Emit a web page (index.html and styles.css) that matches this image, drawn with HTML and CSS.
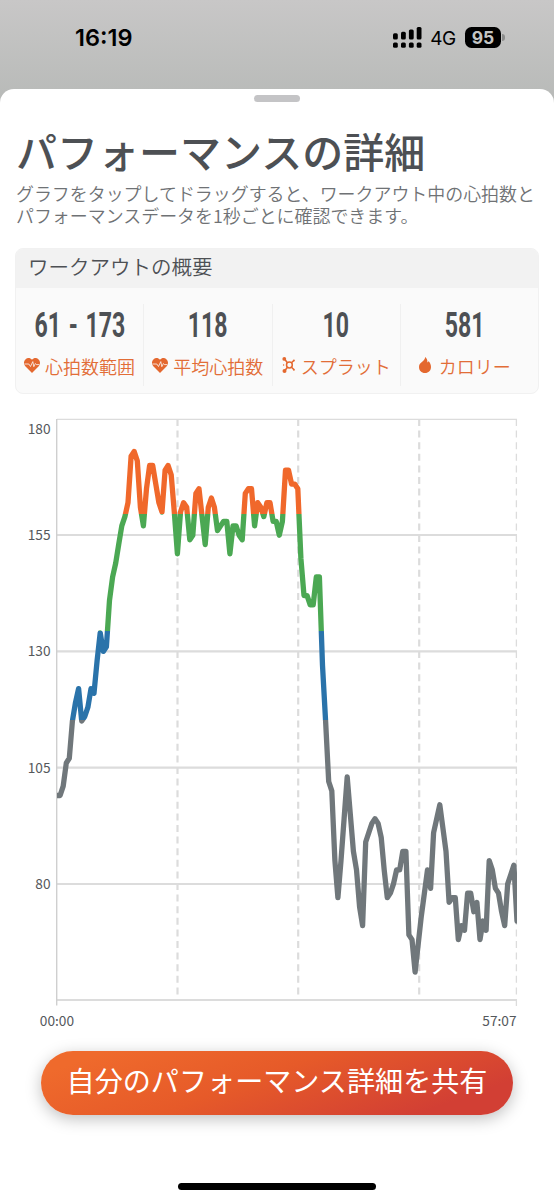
FILE: index.html
```html
<!DOCTYPE html>
<html lang="ja">
<head>
    <meta charset="UTF-8">
    <meta name="viewport" content="width=device-width, initial-scale=1.0">
    <title>パフォーマンスの詳細</title>
    <link rel="stylesheet" href="styles.css">
</head>
<body>

<header class="status-bar">
    <span class="time">16:19</span>
    <div class="status-right">
        <svg class="signal" width="29" height="21" viewBox="0 0 29 21">
            <rect x="0" y="6.2" width="4.8" height="6.2" rx="1.5"/>
            <rect x="8" y="4.8" width="4.8" height="7.6" rx="1.5"/>
            <rect x="15.9" y="2.6" width="4.8" height="9.8" rx="1.5"/>
            <rect x="23.7" y="0" width="4.8" height="12.4" rx="1.5"/>
            <rect x="0" y="15.4" width="4.8" height="5.3" rx="1.5"/>
            <rect x="8" y="15.4" width="4.8" height="5.3" rx="1.5"/>
            <rect x="15.9" y="15.4" width="4.8" height="5.3" rx="1.5"/>
            <rect x="23.7" y="15.4" width="4.8" height="5.3" rx="1.5"/>
        </svg>
        <span class="network">4G</span>
        <span class="battery">95</span>
        <span class="battery-tip"></span>
    </div>
</header>

<main class="sheet">
    <div class="grabber"></div>
    <h1>パフォーマンスの詳細</h1>
    <p class="description">グラフをタップしてドラッグすると、ワークアウト中の心拍数と<br>パフォーマンスデータを1秒ごとに確認できます。</p>

    <section class="summary">
        <h2>ワークアウトの概要</h2>
        <div class="stats">
            <div class="stat">
                <div class="value"><span>61 - 173</span></div>
                <div class="label">
                    <svg class="icon" width="16" height="15" viewBox="0 0 16 15">
                        <path d="M8 15 1.3 8.2C-.5 6.2-.4 3.2 1.4 1.4 3.3-.4 6.2-.4 8 1.8 9.8-.4 12.7-.4 14.6 1.4c1.8 1.8 1.9 4.8.1 6.8z"/>
                        <path class="pulse" d="M.5 6h4.3l1.700 2.500L8.800 3.600 9.800 8.700l1.600-3.200 1 1.100h3"/>
                    </svg>
                    <span>心拍数範囲</span>
                </div>
            </div>
            <div class="stat">
                <div class="value"><span>118</span></div>
                <div class="label">
                    <svg class="icon" width="16" height="15" viewBox="0 0 16 15">
                        <path d="M8 15 1.3 8.2C-.5 6.2-.4 3.2 1.4 1.4 3.3-.4 6.2-.4 8 1.8 9.8-.4 12.7-.4 14.6 1.4c1.8 1.8 1.9 4.8.1 6.8z"/>
                        <path class="pulse" d="M.5 6h4.3l1.700 2.500L8.800 3.600 9.800 8.700l1.600-3.200 1 1.100h3"/>
                    </svg>
                    <span>平均心拍数</span>
                </div>
            </div>
            <div class="stat">
                <div class="value"><span>10</span></div>
                <div class="label splat">
                    <svg class="icon" width="13" height="16" viewBox="0 0 13 16">
                        <circle class="ring" cx="7.4" cy="8" r="2.9"/>
                        <path class="ring" d="M5.4 5.8 2.7 2.3M5.4 10.2 2.8 13.7M9.5 5.8l2.3-2.3M9.5 10.2l2.3 2.3"/>
                        <circle cx="2.3" cy="1.9" r="1.9"/>
                        <circle cx="2.5" cy="13.9" r="2"/>
                        <circle cx="11.9" cy="3.4" r="1"/>
                        <circle cx="11.9" cy="12.7" r="1"/>
                        <circle cx="1.6" cy="8" r=".7"/>
                    </svg>
                    <span>スプラット</span>
                </div>
            </div>
            <div class="stat">
                <div class="value"><span>581</span></div>
                <div class="label calorie">
                    <svg class="icon" width="12" height="16" viewBox="0 0 12 16">
                        <path d="M6.2 0C8 1.500 8.600 3.200 8.300 5.400l1.400-1.200C11.200 5.800 12 7.800 12 10c0 3.500-2.400 6-6 6s-6-2.500-6-6c0-2.200.9-3.500 2.600-4.800C4.800 3.500 6 2 6.200 0z"/>
                    </svg>
                    <span>カロリー</span>
                </div>
            </div>
        </div>
    </section>

    <svg class="chart" width="554" height="620" viewBox="0 0 554 620">
        <defs>
            <!-- Heart rate zones -->
            <linearGradient id="zones" gradientUnits="userSpaceOnUse" x1="0" y1="9" x2="0" y2="590">
                <stop offset="0.164" stop-color="#f0682b"/>
                <stop offset="0.164" stop-color="#4ba853"/>
                <stop offset="0.365" stop-color="#4ba853"/>
                <stop offset="0.365" stop-color="#2a73aa"/>
                <stop offset="0.518" stop-color="#2a73aa"/>
                <stop offset="0.518" stop-color="#70777b"/>
            </linearGradient>
            <clipPath id="plot"><rect x="57" y="0" width="460" height="600"/></clipPath>
        </defs>
        <g class="grid">
            <path class="thin" d="M57 9.300H517"/>
            <path d="M57 125H517M57 241.300H517M57 357.700H517M57 474H517M57 590H517"/>
            <path class="dashed" d="M177.500 9V590M298.200 9V590M419.200 9V590"/>
            <path class="dashed thin" d="M516.400 9V596"/>
            <path class="axis" d="M56.700 9V595.500"/>
        </g>
        <polyline id="heartRate" class="line" clip-path="url(#plot)" stroke="url(#zones)"/>
        <g class="ticks">
            <text x="50.500" y="24">180</text>
            <text x="50.500" y="130">155</text>
            <text x="50.500" y="246.300">130</text>
            <text x="50.500" y="362.700">105</text>
            <text x="50.500" y="479">80</text>
            <text x="74" y="616">00:00</text>
            <text x="516.500" y="616">57:07</text>
        </g>
    </svg>

    <button class="share">自分のパフォーマンス詳細を共有</button>
    <div class="home-indicator"></div>
</main>

<script>
    const bpm = [
        99, 99, 101, 106, 107, 115, 119, 122, 115, 116, 118, 122, 121, 128, 134,
        130, 131, 141, 146, 149, 153, 157, 159, 162, 172, 173, 171, 161, 157, 165,
        170, 170, 166, 162, 160, 169, 170, 168, 160, 151, 160, 162, 161, 154, 155,
        164, 165, 159, 153, 161, 163, 161, 156, 157, 158, 158, 151, 157, 157, 155,
        154, 164, 165, 165, 157, 162, 161, 159, 162, 162, 158, 158, 155, 158, 169,
        169, 166, 166, 165, 150, 142, 142, 140, 140, 146, 146, 127, 115, 102, 100,
        85, 77, 85, 94, 103, 95, 87, 83, 75, 71, 89, 91, 93, 94, 93,
        90, 83, 77, 78, 80, 83, 83, 87, 87, 69, 68, 61, 67, 73, 78,
        83, 79, 91, 94, 97, 92, 87, 76, 77, 77, 68, 71, 70, 78, 78,
        74, 76, 68, 72, 70, 85, 83, 79, 78, 74, 71, 80, 82, 84, 72
    ];

    // 180 bpm at the top, 55 bpm at the bottom
    const points = bpm.map(function (value, i) {
        const x = 57 + i * 460 / (bpm.length - 1);
        const y = 9 + (180 - value) * 581 / 125;
        return x.toFixed(1) + ',' + y.toFixed(1);
    });
    document.getElementById('heartRate').setAttribute('points', points.join(' '));
</script>

</body>
</html>
```

FILE: styles.css
```css
* {
    box-sizing: border-box;
}
body {
    font-family: "Noto Sans CJK JP", sans-serif;
    background: linear-gradient(#c8c7c7, #b8bab8 100px);
    color: #4d5054;
    margin: 0;
    height: 1200px;
    overflow: hidden;
}
.status-bar {
    display: flex;
    justify-content: space-between;
    height: 89px;
    padding: 26px 49px 0 75px;
    color: #000;
    font-family: Inter, sans-serif;
}
.time {
    font-size: 23.500px;
    font-weight: 600;
    line-height: 24px;
}
.status-right {
    display: flex;
    align-items: center;
    height: 22px;
}
.network {
    font-size: 19px;
    letter-spacing: -0.3px;
    margin: 2px 9px 0 8px;
}
.battery {
    width: 36px;
    height: 21px;
    border-radius: 6.500px;
    background: #000;
    color: #c4c5c4;
    font-size: 17.500px;
    font-weight: 700;
    line-height: 21px;
    text-align: center;
}
.battery-tip {
    width: 3px;
    height: 7px;
    margin-left: 1px;
    border-radius: 0 3px 3px 0;
    background: #8b8c8b;
}
.sheet {
    display: flex;
    flex-direction: column;
    height: 1111px;
    background: #fff;
    border-radius: 14px 14px 0 0;
}
.grabber {
    align-self: center;
    width: 46px;
    height: 7px;
    margin-top: 6px;
    border-radius: 4px;
    background: #c4c4c6;
}
h1 {
    margin: 18px 0 0 16px;
    font-size: 41px;
    font-weight: 500;
    line-height: 60px;
}
.description {
    margin: 2px 0 0 16px;
    font-size: 17.950px;
    font-weight: 350;
    line-height: 22px;
    color: #6f7275;
    white-space: nowrap;
}
.summary {
    height: 146px;
    margin: 22px 15px 0;
    border: 1px solid #f1f1f1;
    border-radius: 8px;
    background: #fafafa;
    overflow: hidden;
}
h2 {
    margin: 0;
    padding: 0 0 4px 12px;
    background: #f2f2f2;
    font-size: 20.500px;
    font-weight: 350;
    line-height: 35px;
}
.stats {
    display: grid;
    grid-template-columns: 127px repeat(3, 128.500px);
    height: 76px;
    margin-top: 16px;
}
.stat {
    border-left: 1px solid #f0f0f0;
    text-align: center;
}
.stat:first-child {
    border-left: none;
}
.value {
    height: 42px;
    font-family: Roboto, sans-serif;
    font-size: 34.500px;
    font-weight: 700;
    line-height: 42px;
    white-space: nowrap;
}
.value span {
    display: inline-block;
    transform: scaleX(0.67);
    margin: 0 -30px;
    word-spacing: 3px;
}
.label {
    display: flex;
    align-items: center;
    justify-content: center;
    gap: 5px;
    height: 40px;
    color: #e26d37;
    font-size: 18px;
    font-weight: 350;
    white-space: nowrap;
}
.icon {
    flex: none;
    fill: #e4682f;
    margin-bottom: 2px;
}
.pulse {
    fill: none;
    stroke: #fafafa;
    stroke-width: 0.8;
}
.ring {
    fill: none;
    stroke: #e4682f;
    stroke-width: 1.500;
}
.splat {
    gap: 6px;
}
.calorie {
    gap: 8px;
}
.chart {
    flex: none;
    margin-top: 16px;
}
.grid path {
    fill: none;
    stroke: #dcdcdc;
    stroke-width: 2.200;
}
.grid .thin {
    stroke-width: 1.300;
}
.grid .dashed {
    stroke-dasharray: 7 4.600;
}
.grid .axis {
    stroke: #cfcfcf;
    stroke-width: 1.400;
}
.line {
    fill: none;
    stroke-width: 5.300;
    stroke-linejoin: round;
    stroke-linecap: round;
}
.ticks text {
    fill: #55585c;
    font-size: 13.700px;
    text-anchor: end;
}
.share {
    align-self: center;
    flex: none;
    width: 472px;
    height: 64px;
    margin-top: 21px;
    padding: 0 0 7px;
    border: none;
    border-radius: 32px;
    background: linear-gradient(160deg, #ef6a2c 10%, #e65a29 45%, #d23f34 85%);
    box-shadow: 0 4px 16px rgba(0, 0, 0, 0.25);
    color: #fff;
    font-family: inherit;
    font-size: 28.100px;
    font-weight: 400;
    white-space: nowrap;
}
.home-indicator {
    align-self: center;
    width: 198px;
    height: 7px;
    margin-top: 68px;
    border-radius: 4px;
    background: #000;
}
```
